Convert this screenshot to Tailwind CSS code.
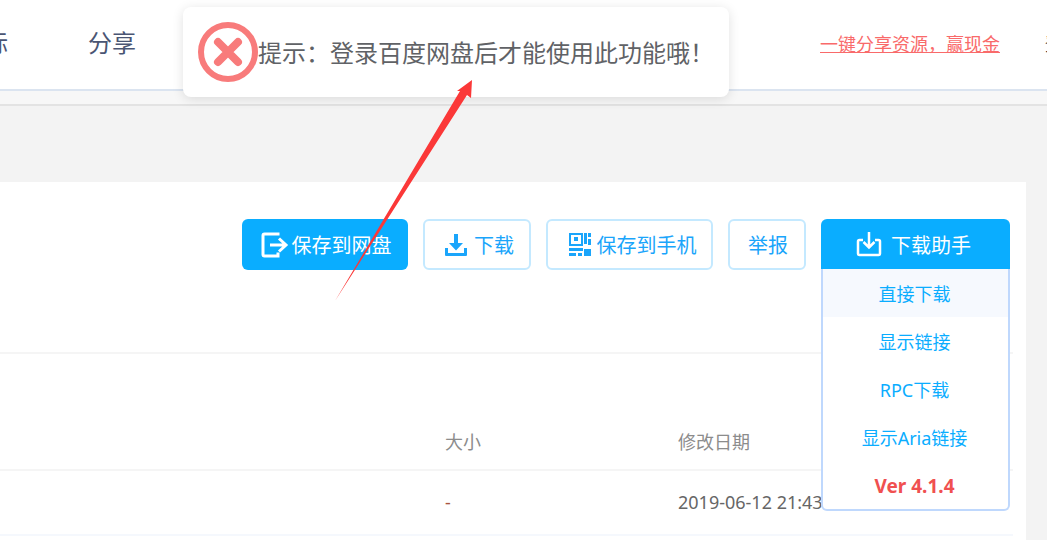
<!DOCTYPE html>
<html lang="zh-CN">
<head>
  <meta charset="UTF-8" />
  <meta name="viewport" content="width=device-width, initial-scale=1.0"/>
  <title>分享</title>
  <script src="https://cdn.jsdelivr.net/npm/@tailwindcss/browser@4"></script>
</head>
<body class="bg-[#f3f3f3] font-['Noto_Sans','Noto_Sans_CJK_SC',sans-serif]">
  <div class="relative w-[1047px] h-[540px] overflow-hidden">

    <!-- header -->
    <header class="h-[91px] bg-white border-b-2 border-[#dbe4f0] flex items-center overflow-hidden pb-[3px]">
      <span class="ml-[-16px] text-[24px] text-[#4a5573]">标</span>
      <span class="ml-[80px] text-[24px] text-[#4a5573]">分享</span>
      <a class="ml-auto mt-[3px] text-[18px] text-[#f96a6a] underline">一键分享资源，赢现金</a>
      <span class="ml-[45px] mr-[-34px] mt-[3px] text-[18px] text-[#333]">登录</span>
    </header>
    <div class="h-[15px] bg-[#f7f7f7] border-b-2 border-[#e3e3e3]"></div>
    <div class="h-[76px]"></div>

    <!-- main card -->
    <main class="w-[1026px] h-[358px] bg-white pr-[13px]">
      <div class="h-[172px] border-b-2 border-[#f5f5f5] pt-[37px] pr-[3px] flex justify-end gap-[15px] items-start">
        <button class="w-[166px] h-[51px] pt-[3px] pl-[2px] rounded-[6px] bg-[#0aadff] text-white text-[20px] flex items-center justify-center gap-[3px]">
          <svg class="mt-[-3px]" width="28" height="26" viewBox="0 0 28 26" fill="none" stroke="white" stroke-width="3">
            <path d="M17 3.500V2H3.500Q2 2 2 3.500V22.500Q2 24 3.500 24H17V20.500" />
            <path d="M9 13H24M18 6.500L25 13L18 19.500" />
          </svg>
          保存到网盘
        </button>
        <button class="w-[108px] h-[51px] pt-[3px] pl-[4px] rounded-[6px] border-2 border-[#c4e9ff] text-[#1aa5fb] text-[20px] flex items-center justify-center gap-[6px]">
          <svg class="mt-[-3px]" width="24" height="24" viewBox="0 0 24 24" fill="#1aa5fb">
            <path d="M10 1H14V10H19L12 17.500L5 10H10Z" />
            <path d="M1 15H4V20H20V15H23V22Q23 23 22 23H2Q1 23 1 22Z" />
          </svg>
          下载
        </button>
        <button class="w-[167px] h-[51px] pt-[3px] pl-[6px] rounded-[6px] border-2 border-[#c4e9ff] text-[#1aa5fb] text-[20px] flex items-center justify-center gap-[6px]">
          <svg class="mt-[-3px]" width="22" height="23" viewBox="0 0 22 23" fill="#1aa5fb">
            <path d="M0 0H14V13H0ZM2 2V11H12V2Z" fill-rule="evenodd" />
            <rect x="5" y="4" width="4" height="4" />
            <rect x="15" y="0" width="3" height="11" />
            <rect x="19" y="0" width="3" height="4" />
            <rect x="19" y="6" width="3" height="6" />
            <rect x="0" y="15" width="14" height="3" />
            <rect x="0" y="20" width="7" height="3" />
            <rect x="9" y="20" width="4" height="3" />
            <rect x="15" y="16" width="7" height="7" />
          </svg>
          保存到手机
        </button>
        <button class="w-[78px] h-[51px] pt-[3px] pl-[2px] rounded-[6px] border-2 border-[#c4e9ff] text-[#1aa5fb] text-[20px]">举报</button>

        <div class="relative w-[189px]">
          <button class="w-full h-[50px] pt-[3px] pr-[4px] rounded-t-[6px] bg-[#0aadff] text-white text-[20px] flex items-center justify-center gap-[9px]">
            <svg class="mt-[-3px]" width="26" height="26" viewBox="0 0 26 26" fill="none" stroke="white" stroke-width="2.500">
              <path d="M7 9H3.500Q2 9 2 10.500V22.500Q2 24 3.500 24H22.500Q24 24 24 22.500V10.500Q24 9 22.500 9H19" />
              <path d="M13 1V16M7.500 11L13 16.500L18.500 11" />
            </svg>
            下载助手
          </button>
          <!-- dropdown sits over the table -->
          <ul class="absolute z-10 left-0 top-[50px] w-[189px] h-[242px] bg-white border-2 border-t-0 border-[#bfd8fd] rounded-b-[6px] text-[18px] text-[#0aadff] text-center">
            <li class="h-[48px] pt-[1px] pr-[2px] leading-[48px] bg-[#f6f9fe]">直接下载</li>
            <li class="h-[48px] pt-[1px] pr-[2px] leading-[48px]">显示链接</li>
            <li class="h-[48px] pt-[1px] pr-[2px] leading-[48px]">RPC下载</li>
            <li class="h-[48px] pt-[1px] pr-[2px] leading-[48px]">显示Aria链接</li>
            <li class="h-[48px] pt-[1px] pr-[2px] leading-[48px] text-[19px] font-bold text-[#f05050]">Ver 4.1.4</li>
          </ul>
        </div>
      </div>

      <div class="h-[117px] border-b-2 border-[#f5f5f5] flex items-end pb-[13px] text-[18px] text-[#8c8c8c]">
        <span class="ml-[445px] w-[233px]">大小</span>
        <span>修改日期</span>
      </div>
      <div class="h-[65px] border-b-2 border-[#f5f8fd] flex items-center text-[18px] text-[#666]">
        <span class="ml-[445px] w-[233px] text-[#a8553f]">-</span>
        <span class="whitespace-nowrap">2019-06-12 21:43</span>
      </div>
    </main>

    <!-- toast -->
    <div class="absolute z-20 left-[183px] top-[7px] w-[546px] h-[90px] bg-white rounded-[8px] shadow-[0_2px_12px_rgba(0,0,0,0.12)] flex items-center pl-[15px]">
      <svg width="60" height="60" viewBox="0 0 60 60" fill="none" stroke="#f87b7b">
        <circle cx="30" cy="30" r="27" stroke-width="6" />
        <path d="M20 20L40 40M40 20L20 40" stroke-width="8" stroke-linecap="round" />
      </svg>
      <span class="pt-[2px] text-[24px] text-[#606266] whitespace-nowrap">提示：登录百度网盘后才能使用此功能哦！</span>
    </div>

    <!-- annotation arrow -->
    <svg class="absolute z-30 left-0 top-0 pointer-events-none" width="1047" height="540" viewBox="0 0 1047 540">
      <polygon points="335,301 460,91 457,91 472,80 471,98 467,95" fill="#fb3838" />
    </svg>
  </div>
</body>
</html>
